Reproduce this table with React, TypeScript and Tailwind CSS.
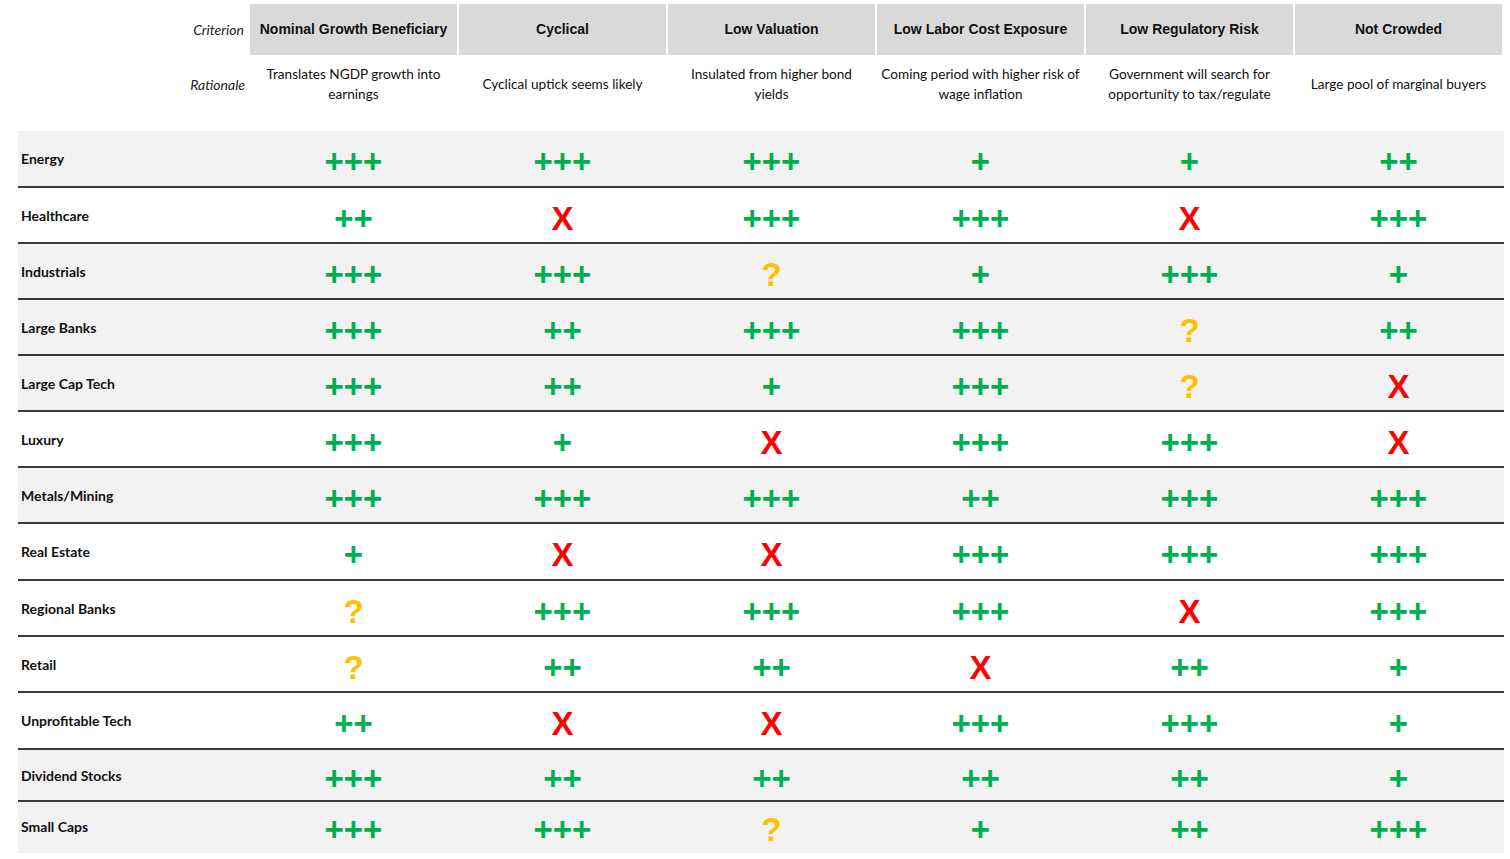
import React from "react";

const cols = [
  { h: "Nominal Growth Beneficiary", r: ["Translates NGDP growth into", "earnings"] },
  { h: "Cyclical", r: ["Cyclical uptick seems likely"] },
  { h: "Low Valuation", r: ["Insulated from higher bond", "yields"] },
  { h: "Low Labor Cost Exposure", r: ["Coming period with higher risk of", "wage inflation"] },
  { h: "Low Regulatory Risk", r: ["Government will search for", "opportunity to tax/regulate"] },
  { h: "Not Crowded", r: ["Large pool of marginal buyers"] },
];

type Row = { name: string; gray: boolean; v: string[]; h: string; line: boolean };

const rows: Row[] = [
  { name: "Energy", gray: true, v: ["+++", "+++", "+++", "+", "+", "++"], h: "h-[57px]", line: true },
  { name: "Healthcare", gray: false, v: ["++", "X", "+++", "+++", "X", "+++"], h: "h-[56px]", line: true },
  { name: "Industrials", gray: true, v: ["+++", "+++", "?", "+", "+++", "+"], h: "h-[56px]", line: true },
  { name: "Large Banks", gray: true, v: ["+++", "++", "+++", "+++", "?", "++"], h: "h-[56px]", line: true },
  { name: "Large Cap Tech", gray: true, v: ["+++", "++", "+", "+++", "?", "X"], h: "h-[56px]", line: true },
  { name: "Luxury", gray: false, v: ["+++", "+", "X", "+++", "+++", "X"], h: "h-[56px]", line: true },
  { name: "Metals/Mining", gray: true, v: ["+++", "+++", "+++", "++", "+++", "+++"], h: "h-[56px]", line: true },
  { name: "Real Estate", gray: false, v: ["+", "X", "X", "+++", "+++", "+++"], h: "h-[57px]", line: true },
  { name: "Regional Banks", gray: false, v: ["?", "+++", "+++", "+++", "X", "+++"], h: "h-[56px]", line: true },
  { name: "Retail", gray: false, v: ["?", "++", "++", "X", "++", "+"], h: "h-[56px]", line: true },
  { name: "Unprofitable Tech", gray: false, v: ["++", "X", "X", "+++", "+++", "+"], h: "h-[57px]", line: true },
  { name: "Dividend Stocks", gray: true, v: ["+++", "++", "++", "++", "++", "+"], h: "h-[52px]", line: true },
  { name: "Small Caps", gray: true, v: ["+++", "+++", "?", "+", "++", "+++"], h: "h-[51px]", line: false },
];

function Sym({ s }: { s: string }) {
  const color = s === "X" ? "text-[#ff0000]" : s === "?" ? "text-[#ffc000]" : "text-[#00b050]";
  return (
    <span
      className={`${color} font-bold text-[33px] leading-none`}
      style={{ fontFamily: '"Liberation Sans", Arial, sans-serif' }}
    >
      {s}
    </span>
  );
}

export default function App() {
  return (
    <div className="w-[1510px] h-[859px] bg-white overflow-hidden" style={{ fontFamily: 'Lato, "Open Sans", sans-serif' }}>
      <div className="pl-[18px] pt-[4px]">
        {/* Criterion row */}
        <div className="grid grid-cols-[232px_repeat(6,209px)] h-[51px]">
          <div className="flex items-center justify-end pr-[6px] text-[14px] italic text-[#222]">Criterion</div>
          {cols.map((c) => (
            <div key={c.h} className="mr-[2px] bg-[#d9d9d9] flex items-center justify-center">
              <span
                className="text-[14px] font-bold text-[#111]"
                style={{ fontFamily: '"Liberation Sans", Arial, sans-serif' }}
              >
                {c.h}
              </span>
            </div>
          ))}
        </div>
        {/* Rationale row */}
        <div className="grid grid-cols-[232px_repeat(6,209px)] h-[76px]">
          <div className="flex items-start justify-end pt-[19px] pr-[5px] text-[14px] italic text-[#222]">Rationale</div>
          {cols.map((c) => (
            <div
              key={c.h}
              className={`mr-[2px] flex flex-col items-center text-[13.6px] leading-[20px] text-[#111] ${
                c.r.length === 1 ? "pt-[19px]" : "pt-[9px]"
              }`}
            >
              {c.r.map((t) => (
                <span key={t}>{t}</span>
              ))}
            </div>
          ))}
        </div>
        {/* Data rows */}
        <div className="w-[1486px]">
          {rows.map((r) => (
            <div key={r.name} className={`${r.gray ? "bg-[#f2f2f2]" : "bg-white"}`}>
              <div className={`grid grid-cols-[232px_repeat(6,209px)] ${r.h}`}>
                <div className="flex items-center pl-[3px] pb-[2px] text-[14px] font-bold text-[#111]">{r.name}</div>
                {r.v.map((s, i) => (
                  <div key={i} className="mr-[2px] flex items-center justify-center pt-[4px]">
                    <Sym s={s} />
                  </div>
                ))}
              </div>
              {r.line && <div className="h-[2px] bg-[#3a3a3a] -mt-[2px] relative" />}
            </div>
          ))}
        </div>
      </div>
    </div>
  );
}
